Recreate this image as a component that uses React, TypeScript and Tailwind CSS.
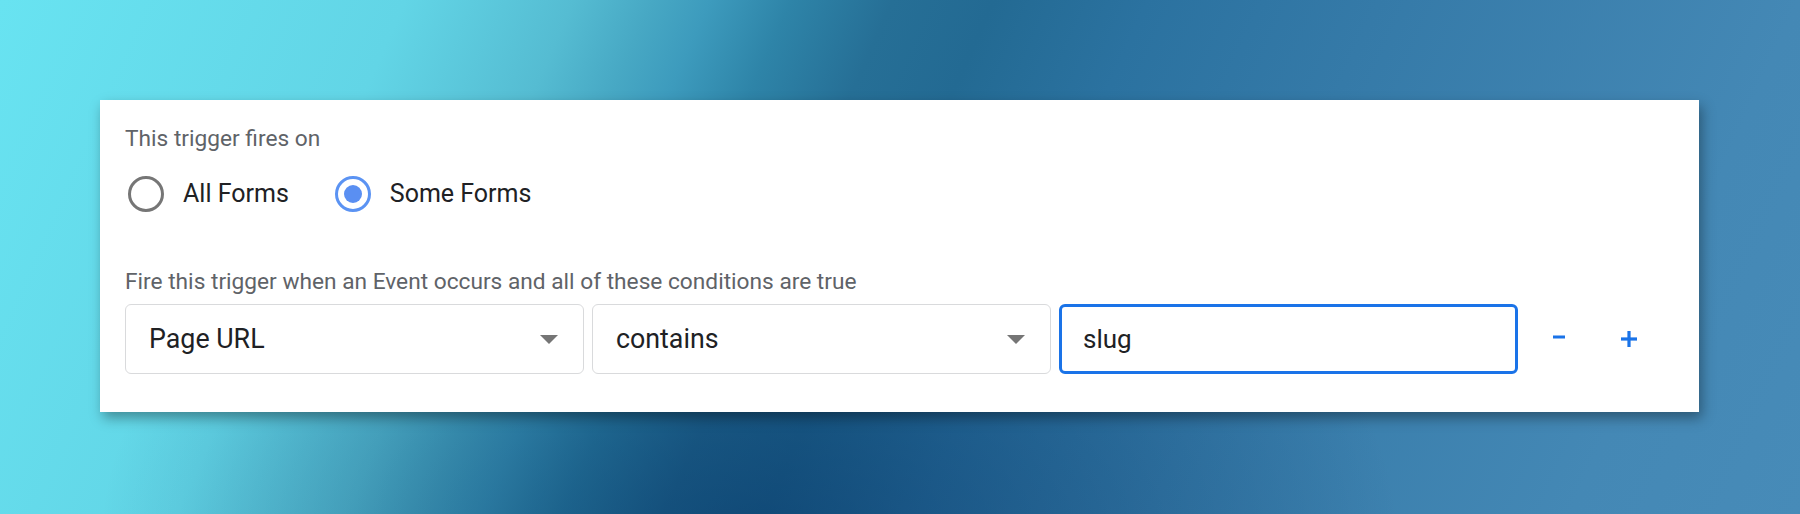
import { useState } from "react";

type Option = "all" | "some";

function Radio({
  checked,
  label,
  onSelect,
}: {
  checked: boolean;
  label: string;
  onSelect: () => void;
}) {
  return (
    <button
      type="button"
      onClick={onSelect}
      className="flex items-center gap-[19px] h-[36px]"
    >
      <span
        className={
          checked
            ? "flex items-center justify-center w-[36px] h-[36px] rounded-full border-[3px] border-[#5b93f3]"
            : "flex items-center justify-center w-[36px] h-[36px] rounded-full border-[3px] border-[#767676]"
        }
      >
        {checked && <span className="w-[18px] h-[18px] rounded-full bg-[#5a8ff2]" />}
      </span>
      <span className="text-[25px] leading-[36px] text-[#202124]">{label}</span>
    </button>
  );
}

function SelectBox({ value }: { value: string }) {
  return (
    <div className="flex items-center justify-between w-[459px] h-[70px] pl-[23px] pr-[25px] rounded-[6px] border-[1.5px] border-[#d9dadc] bg-white">
      <span className="text-[26.8px] text-[#202124]">{value}</span>
      <svg width="18" height="9" viewBox="0 0 18 9" className="mt-[1px]">
        <path d="M0 0 L18 0 L9 9 Z" fill="#757575" />
      </svg>
    </div>
  );
}

export default function App() {
  const [fireOn, setFireOn] = useState<Option>("some");
  const [value, setValue] = useState("slug");

  return (
    <div
      className="w-full h-[514px] pt-[100px] pl-[100px] overflow-hidden bg-[image:radial-gradient(650px_420px_at_750px_540px,rgba(0,45,95,0.55),rgba(0,45,95,0)),linear-gradient(114deg,#68e3f1_0%,#62d5e6_20%,#55bcd2_28.3%,#47a8c4_32.2%,#3d9bbd_35%,#2e84a8_39%,#266f96_44%,#236a93_49%,#2b72a0_56.6%,#357aa8_68%,#4488b5_88.7%,#478bb8_100%)]"
      style={{ fontFamily: "Roboto, 'Liberation Sans', sans-serif" }}
    >
      <div className="w-[1599px] h-[312px] bg-white pl-[25px] pt-[24px] shadow-[3px_6px_12px_rgba(0,0,0,0.35)]">
        {/* Fires on */}
        <div className="h-[30px] text-[22.7px] leading-[30px] text-[#5f6368]">
          This trigger fires on
        </div>
        <div className="mt-[22px] flex items-center gap-[46px] pl-[3px]">
          <Radio
            checked={fireOn === "all"}
            label="All Forms"
            onSelect={() => setFireOn("all")}
          />
          <Radio
            checked={fireOn === "some"}
            label="Some Forms"
            onSelect={() => setFireOn("some")}
          />
        </div>

        {/* Conditions */}
        <div className="mt-[55px] h-[30px] text-[22.7px] leading-[30px] text-[#5f6368]">
          Fire this trigger when an Event occurs and all of these conditions are true
        </div>
        <div className="mt-[7px] flex items-center gap-[8px]">
          <SelectBox value="Page URL" />
          <SelectBox value="contains" />
          <input
            value={value}
            onChange={(e) => setValue(e.target.value)}
            className="w-[459px] h-[70px] pl-[21px] rounded-[6px] border-[3px] border-[#1a73e8] text-[26px] text-[#202124] outline-none"
            style={{ fontFamily: "Roboto, 'Liberation Sans', sans-serif" }}
          />
          <button type="button" className="ml-[8px] w-[50px] h-[50px] flex items-center justify-center mt-[-4px]">
            <svg width="12" height="4" viewBox="0 0 12 4">
              <rect x="0" y="0.5" width="12" height="3" fill="#1a73e8" />
            </svg>
          </button>
          <button type="button" className="ml-[12px] w-[50px] h-[50px] flex items-center justify-center">
            <svg width="16" height="16" viewBox="0 0 16 16">
              <rect x="0" y="6.4" width="16" height="3.2" fill="#1a73e8" />
              <rect x="6.4" y="0" width="3.2" height="16" fill="#1a73e8" />
            </svg>
          </button>
        </div>
      </div>
    </div>
  );
}
